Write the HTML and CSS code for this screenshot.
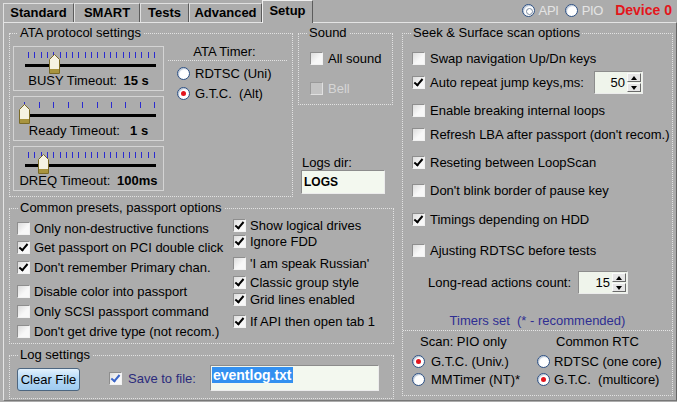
FILE: index.html
```html
<!DOCTYPE html>
<html lang="en">
<head>
  <meta charset="utf-8">
  <title>Setup</title>
  <link rel="stylesheet" href="styles.css">
</head>
<body>
<div class="window">

  <div class="topbar">
    <div class="tabs">
      <span class="tab">Standard</span>
      <span class="tab">SMART</span>
      <span class="tab">Tests</span>
      <span class="tab">Advanced</span>
      <span class="tab active">Setup</span>
    </div>
    <div class="mode">
      <span class="rb dis on"></span><span class="dimtext">API</span>
      <span class="rb dis"></span><span class="dimtext">PIO</span>
      <span class="device">Device 0</span>
    </div>
  </div>

  <div class="page">
    <div class="leftcol">
      <div class="row1">

        <!-- ATA protocol -->
        <fieldset class="grp ata">
          <legend>ATA protocol settings</legend>
          <div class="ata-body">
            <div class="sliders">
              <div class="slider">
                <svg width="149" height="27" viewBox="0 0 149 27">
                  <path d="M14.5 5v6M20.5 5v6M27.5 5v6M33.5 5v6M39.5 5v6M46.5 5v6M52.5 5v6M58.5 5v6M64.5 5v6M71.5 5v6M77.5 5v6M83.5 5v6M90.5 5v6M96.5 5v6M102.5 5v6M109.5 5v6M115.5 5v6M121.5 5v6M127.5 5v6M134.5 5v6M140.5 5v6" stroke="#2b2bd0" stroke-width="1"/>
                  <rect x="11" y="17" width="131" height="3" fill="#000"/>
                  <g transform="translate(35 7)">
                    <polygon points="0.5,5.5 5.5,0.5 10.5,5.5 10.5,19.5 0.5,19.5" fill="#f5f3e2" stroke="#7a6a26"/>
                    <rect x="1" y="15" width="9" height="4" fill="#a8943e"/>
                  </g>
                </svg>
                <div class="slabel">BUSY Timeout: <b>15 s</b></div>
              </div>
              <div class="slider">
                <svg width="149" height="27" viewBox="0 0 149 27">
                  <path d="M10.5 5v6M25.5 5v6M39.5 5v6M54.5 5v6M68.5 5v6M83.5 5v6M97.5 5v6M111.5 5v6M126.5 5v6M140.5 5v6" stroke="#2b2bd0" stroke-width="1"/>
                  <rect x="11" y="17" width="131" height="3" fill="#000"/>
                  <g transform="translate(5 7)">
                    <polygon points="0.5,5.5 5.5,0.5 10.5,5.5 10.5,19.5 0.5,19.5" fill="#f5f3e2" stroke="#7a6a26"/>
                    <rect x="1" y="15" width="9" height="4" fill="#a8943e"/>
                  </g>
                </svg>
                <div class="slabel">Ready Timeout: &nbsp;<b>1 s</b></div>
              </div>
              <div class="slider">
                <svg width="149" height="27" viewBox="0 0 149 27">
                  <path d="M14.5 5v6M20.5 5v6M27.5 5v6M33.5 5v6M39.5 5v6M46.5 5v6M52.5 5v6M58.5 5v6M64.5 5v6M71.5 5v6M77.5 5v6M83.5 5v6M90.5 5v6M96.5 5v6M102.5 5v6M109.5 5v6M115.5 5v6M121.5 5v6M127.5 5v6M134.5 5v6M140.5 5v6" stroke="#2b2bd0" stroke-width="1"/>
                  <rect x="11" y="17" width="131" height="3" fill="#000"/>
                  <g transform="translate(24 7)">
                    <polygon points="0.5,5.5 5.5,0.5 10.5,5.5 10.5,19.5 0.5,19.5" fill="#f5f3e2" stroke="#7a6a26"/>
                    <rect x="1" y="15" width="9" height="4" fill="#a8943e"/>
                  </g>
                </svg>
                <div class="slabel">DREQ Timeout: <b>100ms</b></div>
              </div>
            </div>
            <div class="timer">
              <div class="timer-title">ATA Timer:</div>
              <div class="opt radio-row first"><span class="rb"></span>RDTSC (Uni)</div>
              <div class="opt radio-row"><span class="rb on"></span>G.T.C.&nbsp; (Alt)</div>
            </div>
          </div>
        </fieldset>

        <div class="side">
          <fieldset class="grp sound">
            <legend>Sound</legend>
            <div class="sound-body">
              <div class="opt"><span class="cb"></span>All sound</div>
              <div class="opt disabled bell"><span class="cb"></span>Bell</div>
            </div>
          </fieldset>
          <div class="logs">
            <div class="logs-label">Logs dir:</div>
            <div class="field logs-field">LOGS</div>
          </div>
        </div>
      </div>

      <!-- presets -->
      <fieldset class="grp presets">
        <legend>Common presets, passport options</legend>
        <div class="presets-body">
          <div class="pcol left">
            <div class="opt sm mt5"><span class="cb"></span>Only non-destructive functions</div>
            <div class="opt sm mt3"><span class="cb on"></span>Get passport on PCI double click</div>
            <div class="opt sm mt4"><span class="cb on"></span>Don't remember Primary chan.</div>
            <div class="opt sm mt8"><span class="cb"></span>Disable color into passport</div>
            <div class="opt sm mt4"><span class="cb"></span>Only SCSI passport command</div>
            <div class="opt sm mt4"><span class="cb"></span>Don't get drive type (not recom.)</div>
          </div>
          <div class="pcol right">
            <div class="opt sm mt2"><span class="cb on"></span>Show logical drives</div>
            <div class="opt sm"><span class="cb on"></span>Ignore FDD</div>
            <div class="opt sm mt6"><span class="cb"></span>'I am speak Russian'</div>
            <div class="opt sm mt3"><span class="cb on"></span>Classic group style</div>
            <div class="opt sm mt1"><span class="cb on"></span>Grid lines enabled</div>
            <div class="opt sm mt6"><span class="cb on"></span>If API then open tab 1</div>
          </div>
        </div>
      </fieldset>

      <!-- log -->
      <fieldset class="grp logset">
        <legend>Log settings</legend>
        <div class="log-body">
          <span class="btn">Clear File</span>
          <div class="opt save"><span class="cb on blue"></span>Save to file:</div>
          <div class="field log-field"><span class="sel">eventlog.txt</span></div>
        </div>
      </fieldset>
    </div>

    <!-- seek & surface -->
    <fieldset class="grp seek">
      <legend>Seek &amp; Surface scan options</legend>
      <div class="seek-body">
        <div class="opt mt8"><span class="cb"></span>Swap navigation Up/Dn keys</div>
        <div class="opt tall mt3"><span class="cb on"></span>Auto repeat jump keys,ms:
          <span class="spin jump"><span class="spin-val">50</span><span class="arrows"><span class="arr up"></span><span class="arr down"></span></span></span>
        </div>
        <div class="opt mt6"><span class="cb"></span>Enable breaking internal loops</div>
        <div class="opt mt4"><span class="cb"></span>Refresh LBA after passport (don't recom.)</div>
        <div class="opt mt8"><span class="cb on"></span>Reseting between LoopScan</div>
        <div class="opt mt8"><span class="cb"></span>Don't blink border of pause key</div>
        <div class="opt mt9"><span class="cb on"></span>Timings depending on HDD</div>
        <div class="opt mt11"><span class="cb"></span>Ajusting RDTSC before tests</div>
        <div class="opt tall mt11 longread">Long-read actions count:
          <span class="spin count"><span class="spin-val">15</span><span class="arrows"><span class="arr up"></span><span class="arr down"></span></span></span>
        </div>
        <div class="timers-title">Timers set &nbsp;(* - recommended)</div>
        <div class="timers">
          <div class="tcol">
            <div class="thead">Scan: PIO only</div>
            <div class="opt trow mt2"><span class="rb on"></span>G.T.C. (Univ.)</div>
            <div class="opt trow"><span class="rb"></span>MMTimer (NT)*</div>
          </div>
          <div class="tcol rtc">
            <div class="thead">Common RTC</div>
            <div class="opt trow mt2"><span class="rb"></span>RDTSC (one core)</div>
            <div class="opt trow"><span class="rb on"></span>G.T.C.&nbsp; (multicore)</div>
          </div>
        </div>
      </div>
    </fieldset>
  </div>
</div>
</body>
</html>
```

FILE: styles.css
```css
* {
  box-sizing: border-box;
}
body {
  margin: 0;
  background: #acacac;
  font-family: "Liberation Sans", Arial, sans-serif;
  font-size: 13px;
  color: #000;
}
.window {
  width: 677px;
  height: 402px;
  overflow: hidden;
}

/* tabs */
.topbar {
  height: 22px;
  display: flex;
  padding-left: 3px;
}
.tabs {
  display: grid;
  grid-template-columns: 71px 66px 49px 73px 51px;
  align-items: end;
  height: 22px;
}
.tab {
  height: 19px;
  line-height: 18px;
  text-align: center;
  font-weight: bold;
  border-top: 1px solid #e0e0e0;
  border-left: 1px solid #e0e0e0;
  border-right: 1px solid #5c5c5c;
}
.tab.active {
  position: relative;
  z-index: 1;
  height: 23px;
  line-height: 20px;
  margin-bottom: -1px;
  background: #acacac;
  border-top-color: #f0f0f0;
  border-left-color: #f0f0f0;
}
.mode {
  margin-left: auto;
  height: 20px;
  display: flex;
  align-items: center;
  padding-right: 5px;
}
.dimtext {
  color: #e4e4e4;
  margin: 0 6px 0 4px;
  letter-spacing: -0.3px;
}
.device {
  color: #e3161b;
  font-weight: bold;
  font-size: 14px;
  margin-left: 6px;
}

/* page */
.page {
  margin-left: 3px;
  width: 674px;
  height: 379px;
  border-top: 1px solid #e4e4e4;
  border-left: 1px solid #e4e4e4;
  border-right: 1px solid #666;
  border-bottom: 1px solid #777;
  padding: 3px 0 0 5px;
  display: flex;
  gap: 8px;
}
.leftcol {
  width: 385px;
  display: flex;
  flex-direction: column;
}
.row1 {
  display: flex;
  gap: 5px;
  height: 171px;
}

/* group boxes */
.grp {
  margin: 0;
  padding: 0;
  min-width: 0;
  border: 1px dotted #e2e2e2;
}
.grp legend {
  margin-left: 8px;
  padding: 0 2px;
  line-height: 14px;
}

.ata {
  width: 284px;
}
.ata-body {
  display: flex;
  gap: 4px;
  padding: 6px 0 5px 3px;
}
.sliders {
  display: flex;
  flex-direction: column;
  gap: 5px;
}
.slider {
  width: 151px;
  height: 45px;
  border: 1px solid #d4d4d4;
}
.slider svg {
  display: block;
}
.slabel {
  text-align: center;
  line-height: 14px;
  white-space: nowrap;
}
.slabel b {
  margin-left: 3px;
}
.timer {
  width: 119px;
  margin-top: -1px;
}
.timer-title {
  line-height: 13px;
  padding: 0 6px 2px 0;
  text-align: center;
  border-bottom: 1px dotted #e4e4e4;
}
.radio-row {
  height: 19px;
  padding-left: 9px;
}
.radio-row.first {
  margin-top: 2px;
}

.side {
  width: 95px;
  display: flex;
  flex-direction: column;
}
.sound {
  width: 95px;
}
.sound-body {
  padding: 8px 0 6px 11px;
}
.bell {
  margin-top: 10px;
}
.logs {
  margin-top: auto;
  margin-bottom: 3px;
  padding-left: 3px;
}
.logs-label {
  line-height: 14px;
  padding-left: 1px;
}
.field {
  background: #f3f8ef;
  border: 1px solid;
  border-color: #8c8c8c #ececec #ececec #8c8c8c;
}
.logs-field {
  width: 84px;
  height: 24px;
  font-weight: bold;
  font-size: 12px;
  line-height: 22px;
  padding-left: 2px;
}

/* options */
.opt {
  display: flex;
  align-items: center;
  gap: 5px;
  height: 20px;
  white-space: nowrap;
}
.opt.sm {
  height: 16px;
}
.opt.tall {
  height: 23px;
}
.mt1 { margin-top: 1px; }
.mt2 { margin-top: 2px; }
.mt3 { margin-top: 3px; }
.mt4 { margin-top: 4px; }
.mt5 { margin-top: 5px; }
.mt6 { margin-top: 6px; }
.mt8 { margin-top: 8px; }
.mt9 { margin-top: 9px; }
.mt11 { margin-top: 11px; }

.cb {
  position: relative;
  flex: none;
  width: 13px;
  height: 13px;
  background: linear-gradient(135deg, #dcdcdc, #f8f8f8 60%);
  border: 1px solid;
  border-color: #8e8e8e #f2f2f2 #f2f2f2 #8e8e8e;
}
.cb.on::after {
  content: "";
  position: absolute;
  left: 3px;
  top: 0px;
  width: 3px;
  height: 7px;
  border: solid #000;
  border-width: 0 2px 2px 0;
  transform: rotate(40deg);
}
.cb.blue::after {
  border-color: #3a64c8;
}
.disabled {
  color: #d6d6d6;
}
.disabled .cb {
  background: #c4c4c4;
  border-color: #9a9a9a #e0e0e0 #e0e0e0 #9a9a9a;
}

.rb {
  position: relative;
  flex: none;
  width: 13px;
  height: 13px;
  border-radius: 50%;
  background: #fff;
  border: 1px solid #2c4f82;
  box-shadow: inset 1px 1px 1px #b8c4d4;
}
.rb.on::after {
  content: "";
  position: absolute;
  left: 3px;
  top: 3px;
  width: 5px;
  height: 5px;
  border-radius: 50%;
  background: #e3141c;
}
.rb.dis {
  border-color: #2c4f82;
}
.rb.dis.on::after {
  background: #fff;
  border: 1px solid #7a8aa0;
}

/* presets */
.presets {
  margin-top: 4px;
}
.presets-body {
  display: flex;
  padding: 0 0 4px 7px;
}
.pcol.left {
  width: 216px;
}
.pcol .opt {
  gap: 4px;
}

/* log */
.logset {
  margin-top: 4px;
}
.log-body {
  display: flex;
  align-items: center;
  height: 36px;
  padding: 3px 0 7px 7px;
}
.btn {
  width: 63px;
  height: 23px;
  margin-top: 3px;
  line-height: 21px;
  text-align: center;
  border: 1px solid #4d6680;
  border-radius: 3px;
  background: linear-gradient(#e2f1fd, #b3d8f6 50%, #9fcbf0);
}
.save {
  margin-left: 29px;
  color: #2b2b7c;
  gap: 6px;
}
.log-field {
  margin-left: 14px;
  width: 169px;
  height: 26px;
  padding: 1px 0 0 1px;
  align-self: flex-start;
}
.sel {
  display: inline-block;
  background: #3390f0;
  color: #fff;
  font-weight: bold;
  font-size: 14px;
  line-height: 16px;
  padding: 0 1px;
}

/* seek */
.seek {
  width: 271px;
  height: 370px;
}
.seek-body {
  padding: 0 0 4px 9px;
}
.spin {
  display: flex;
  align-items: center;
  justify-content: flex-end;
  height: 23px;
  margin-left: auto;
  background: #eff4eb;
  border: 1px solid;
  border-color: #8c8c8c #ececec #ececec #8c8c8c;
  padding-right: 1px;
}
.spin.jump {
  width: 49px;
  margin-right: 29px;
}
.spin.count {
  width: 50px;
  margin-right: 44px;
}
.spin-val {
  margin-right: 2px;
}
.arrows {
  display: flex;
  flex-direction: column;
  gap: 1px;
}
.arr {
  position: relative;
  width: 14px;
  height: 9px;
  background: #e6e6e6;
  border: 1px solid;
  border-color: #fafafa #6a6a6a #6a6a6a #fafafa;
}
.arr::after {
  content: "";
  position: absolute;
  left: 3px;
  width: 0;
  height: 0;
  border-left: 3.5px solid transparent;
  border-right: 3.5px solid transparent;
}
.arr.up::after {
  top: 2px;
  border-bottom: 4px solid #000;
}
.arr.down::after {
  top: 2px;
  border-top: 4px solid #000;
}
.longread {
  padding-left: 16px;
}
.timers-title {
  margin: 19px 0 0 -9px;
  line-height: 16px;
  padding-bottom: 1px;
  text-align: center;
  color: #2f2f92;
  border-bottom: 1px dotted #e6e6e6;
}
.timers {
  display: flex;
  margin-top: 3px;
}
.tcol {
  width: 125px;
}
.tcol.rtc {
  width: 134px;
}
.thead {
  line-height: 16px;
  padding-left: 8px;
}
.rtc .thead {
  padding-left: 19px;
}
.trow {
  height: 18px;
  gap: 6px;
}
.trow + .trow {
  height: 19px;
}
.rtc .trow {
  gap: 4px;
}
```
